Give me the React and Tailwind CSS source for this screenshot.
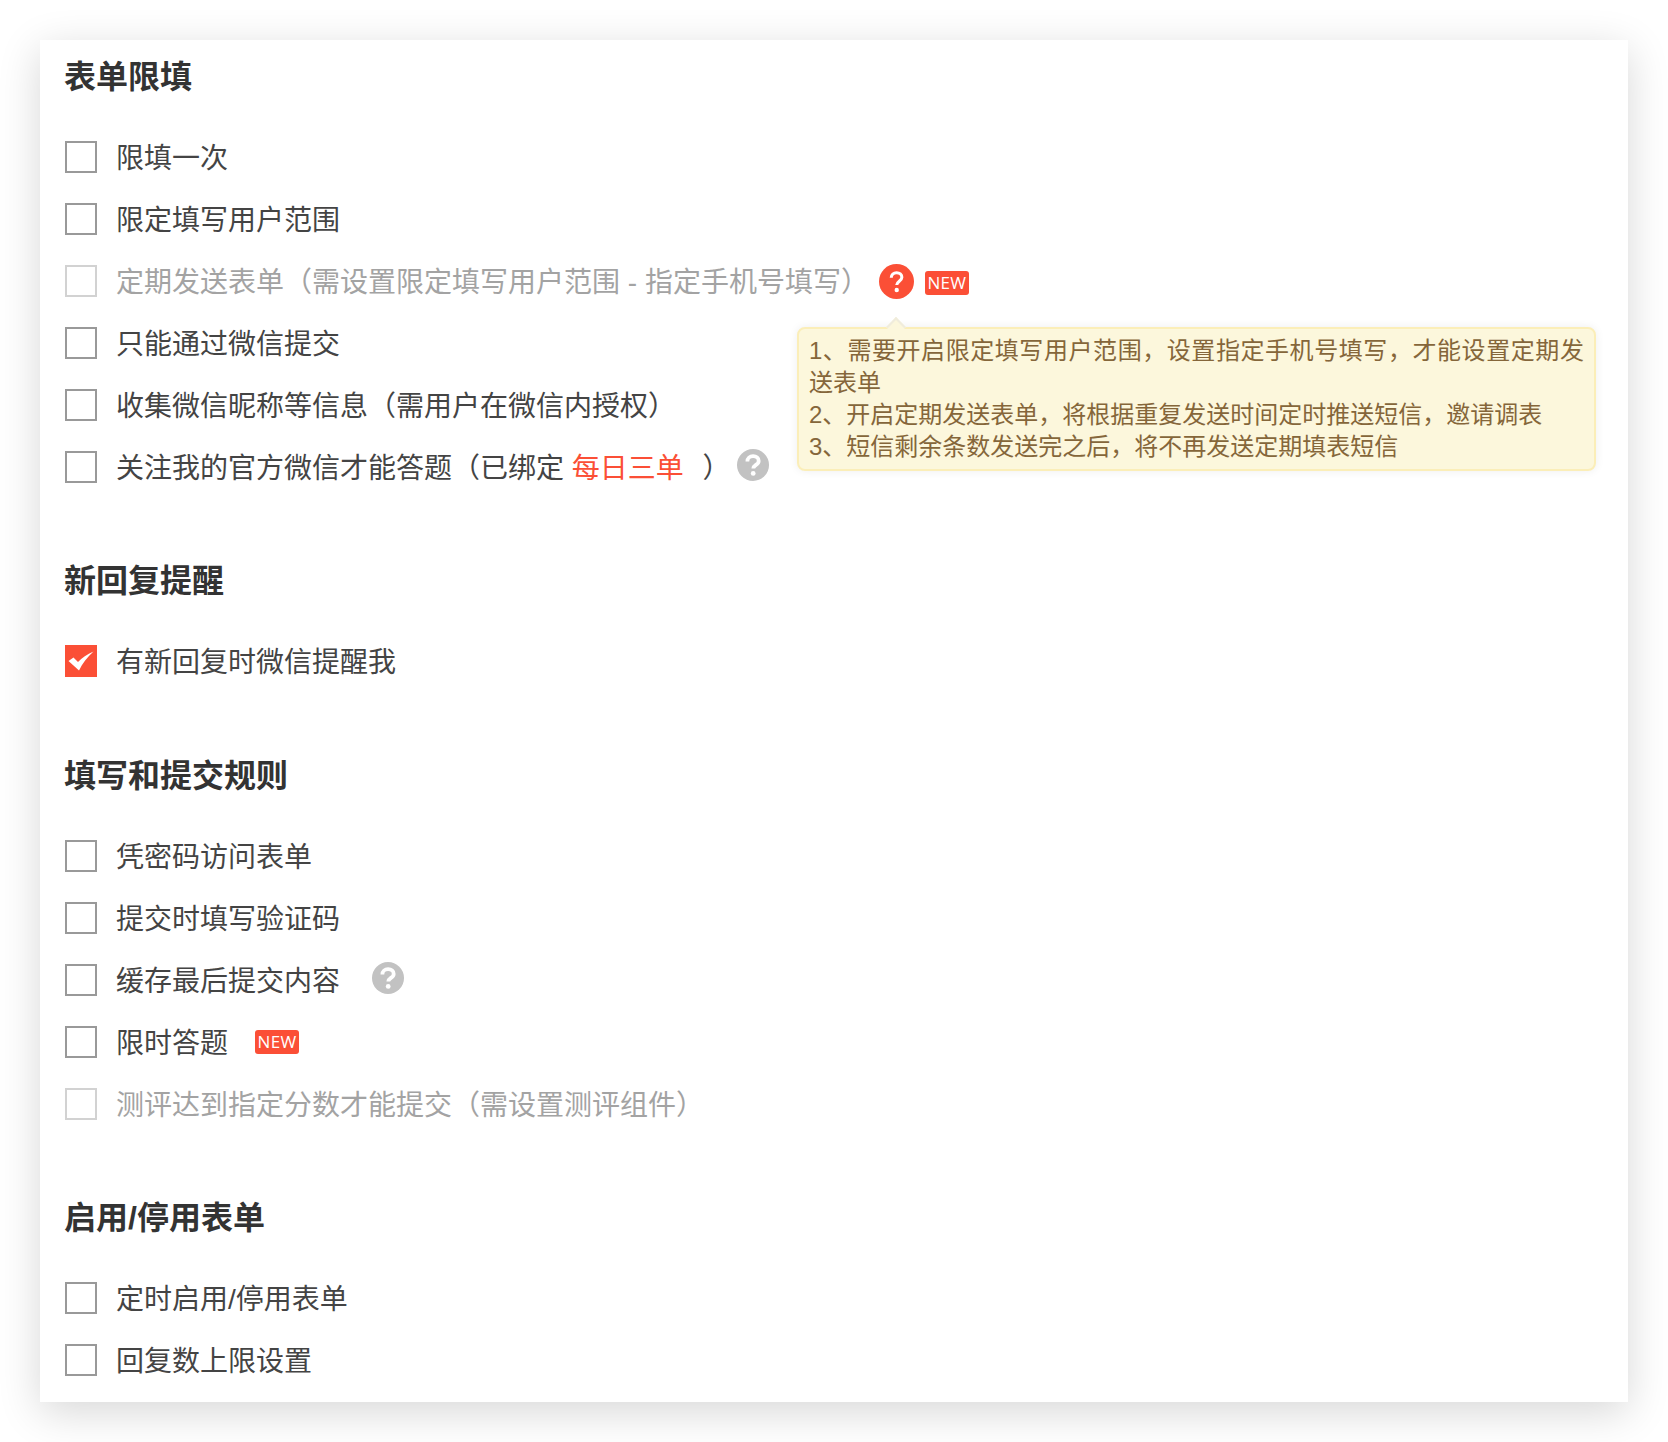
const font = { fontFamily: '"Liberation Sans", "Noto Sans CJK SC", sans-serif' };

function Help({ red }) {
  return (
    <svg viewBox="0 0 32 32" className={red ? "w-[35px] h-[35px]" : "w-8 h-8"}>
      <circle cx="16" cy="16" r="16" fill={red ? "#fb4f36" : "#c2c2c2"} />
      <path
        d={
          red
            ? "M11.2 12.6c0-2.8 2.1-4.6 4.9-4.6s4.8 1.7 4.8 4.1c0 3.6-4.7 3.6-4.7 7.1"
            : "M10.4 12.4c0-3.2 2.4-5.2 5.7-5.2s5.6 1.9 5.6 4.7c0 4-5.4 4-5.4 7.7"
        }
        fill="none"
        stroke="#fff"
        strokeWidth={red ? 2.8 : 3.8}
      />
      <circle cx="16.2" cy={red ? 23.8 : 24.4} r={red ? 2 : 2.4} fill="#fff" />
    </svg>
  );
}

function New() {
  return (
    <span className="flex items-center justify-center w-11 h-6 rounded-[3px] bg-[#fb4f36] text-white text-[17px] leading-6 font-normal font-['Open_Sans',sans-serif] tracking-[0.3px]">
      NEW
    </span>
  );
}

function Row({ label, checked, disabled, children }) {
  return (
    <div className="relative flex items-center h-[62px]">
      <span
        className={
          "flex items-center justify-center shrink-0 w-8 h-8 " +
          (checked ? "bg-[#fb4f36]" : disabled ? "border-2 border-[#d2d2d2] bg-white" : "border-2 border-[#999999] bg-white")
        }
      >
        {checked && (
          <svg viewBox="0 0 32 32" className="w-8 h-8 shrink-0">
            <path d="M3.5 16L8.5 12.5L13 17C17 13 22 9 28.5 6.5C22 12.5 17.5 18 14 25.5Z" fill="#fff" />
          </svg>
        )}
      </span>
      <span className={"ml-[19px] pt-1 text-[28px] leading-[58px] whitespace-nowrap " + (disabled ? "text-[#a3a3a3]" : "text-[#444444]")}>
        {label}
      </span>
      {children}
    </div>
  );
}

function Section({ title, children, className }) {
  return (
    <section className={className}>
      <h2 className="-ml-px text-[32px] leading-[74px] font-bold text-[#333333]">{title}</h2>
      <div className="mt-3">{children}</div>
    </section>
  );
}

export default function App() {
  return (
    <div className="bg-white p-10 w-[1668px] h-[1442px]" style={font}>
      <div className="bg-white w-[1588px] h-[1362px] px-[25px] shadow-[0_10px_40px_rgba(0,0,0,0.16)]">
        <Section title="表单限填">
          <Row label="限填一次" />
          <Row label="限定填写用户范围" />
          <Row label="定期发送表单（需设置限定填写用户范围 - 指定手机号填写）" disabled>
            <span className="relative flex items-center ml-[10px]">
              <Help red />
              <span className="absolute left-[-82px] top-[63px] z-10 w-[799px] h-[144px] rounded-lg border-2 border-[#fbeeb8] bg-[#fcf7dc] px-[10px] pt-[6px] pb-1 text-[24px] leading-8 text-[#85663a] shadow-[0_0_10px_rgba(0,0,0,0.07)]">
                <span className="absolute left-[90px] top-[-9px] w-[14px] h-[14px] rotate-45 bg-[#fcf7dc] border-l-2 border-t-2 border-[#f0ecdc]" />
                <span className="relative block text-justify">
                  1、需要开启限定填写用户范围，设置指定手机号填写，才能设置定期发送表单
                  <br />
                  2、开启定期发送表单，将根据重复发送时间定时推送短信，邀请调表
                  <br />
                  3、短信剩余条数发送完之后，将不再发送定期填表短信
                </span>
              </span>
            </span>
            <span className="ml-[11px] mt-1">
              <New />
            </span>
          </Row>
          <Row label="只能通过微信提交" />
          <Row label="收集微信昵称等信息（需用户在微信内授权）" />
          <Row
            label={
              <>
                关注我的官方微信才能答题（已绑定 <span className="text-[#fb4f36] mr-[11px]">每日三单</span> ）
              </>
            }
          >
            <span className="ml-[6px] mb-1">
              <Help />
            </span>
          </Row>
        </Section>

        <Section title="新回复提醒" className="mt-[46px]">
          <Row label="有新回复时微信提醒我" checked />
        </Section>

        <Section title="填写和提交规则" className="mt-[47px]">
          <Row label="凭密码访问表单" />
          <Row label="提交时填写验证码" />
          <Row label="缓存最后提交内容">
            <span className="ml-8 mb-1">
              <Help />
            </span>
          </Row>
          <Row label="限时答题">
            <span className="ml-[27px]">
              <New />
            </span>
          </Row>
          <Row label="测评达到指定分数才能提交（需设置测评组件）" disabled />
        </Section>

        <Section title="启用/停用表单" className="mt-[46px]">
          <Row label="定时启用/停用表单" />
          <Row label="回复数上限设置" />
        </Section>
      </div>
    </div>
  );
}
